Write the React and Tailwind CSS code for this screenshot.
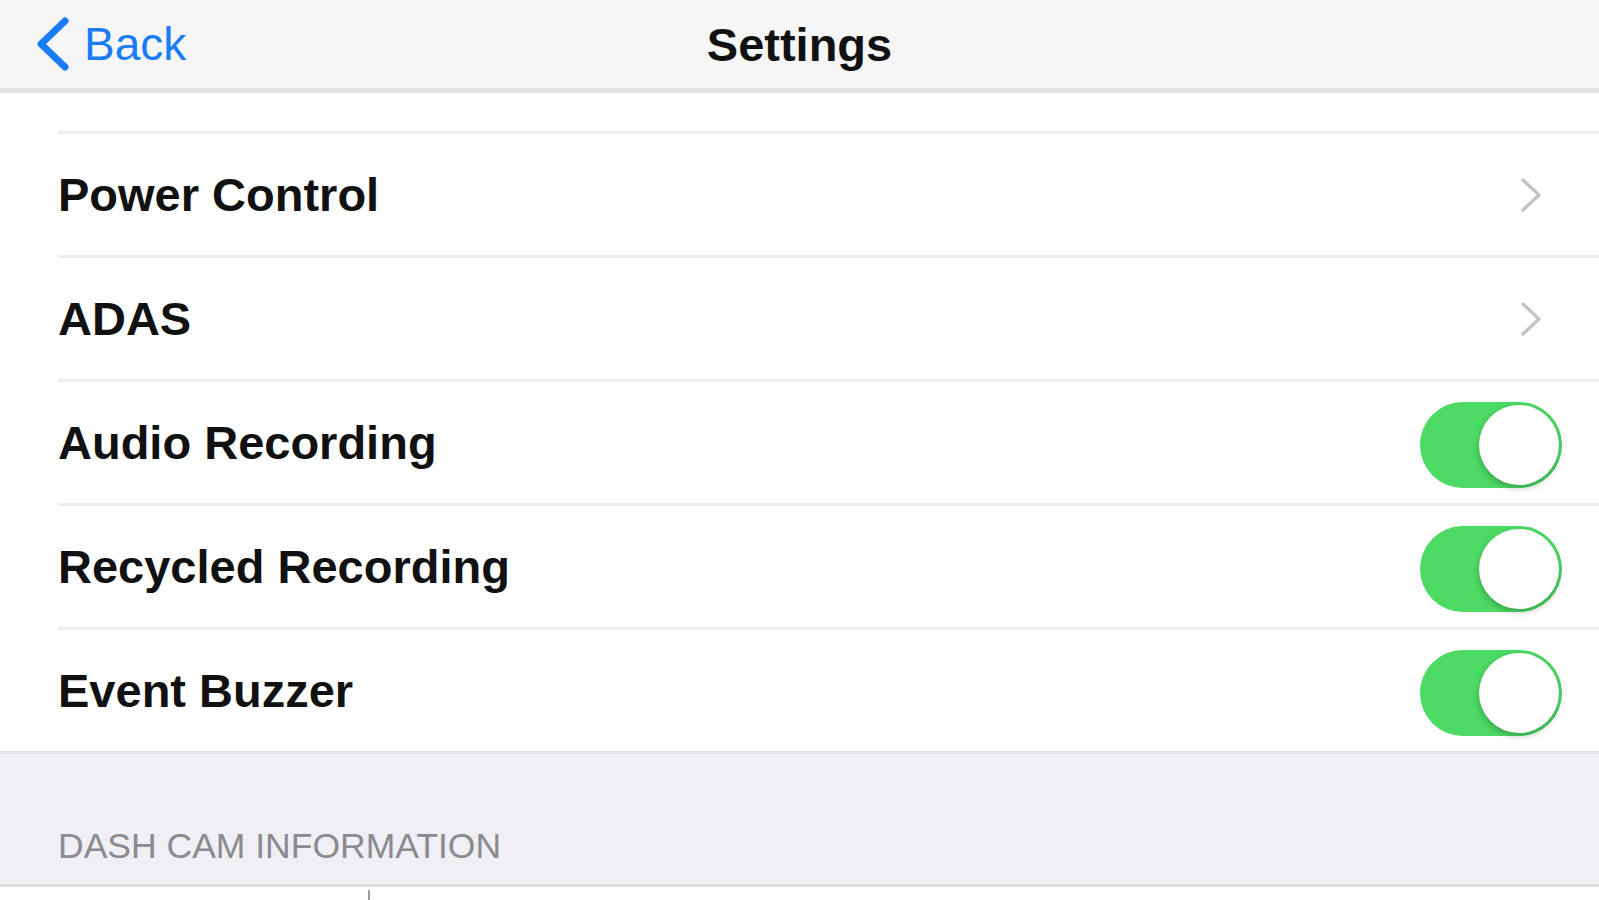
import React from "react";

const rows = [
  { label: "Power Control", type: "link" },
  { label: "ADAS", type: "link" },
  { label: "Audio Recording", type: "toggle" },
  { label: "Recycled Recording", type: "toggle" },
  { label: "Event Buzzer", type: "toggle", last: true },
];

function Chevron() {
  return (
    <svg width="26" height="38" viewBox="0 0 26 38" className="mr-[55px]">
      <polyline
        points="5,4 21,19 5,34"
        fill="none"
        stroke="#c4c4c8"
        strokeWidth="3.5"
        strokeLinecap="round"
        strokeLinejoin="round"
      />
    </svg>
  );
}

function Toggle() {
  return (
    <div className="mr-[37px] mt-[4px] flex h-[86px] w-[142px] items-center justify-end rounded-full bg-[#4cd964] pr-[3px]">
      <div className="h-[80px] w-[80px] rounded-full bg-white shadow-[0_3px_6px_rgba(0,0,0,0.25)]" />
    </div>
  );
}

export default function App() {
  return (
    <div className="flex h-[900px] w-full flex-col overflow-hidden bg-white font-['Liberation_Sans',Arial,sans-serif]">
      {/* Nav bar */}
      <div className="relative flex h-[93px] shrink-0 items-center border-b-[5px] border-[#e4e4e4] bg-[#f6f6f6]">
        <div className="flex items-center pl-[34px] text-[#1b7cf4]">
          <svg width="38" height="56" viewBox="0 0 38 56">
            <polyline
              points="31,5 7,28 31,51"
              fill="none"
              stroke="currentColor"
              strokeWidth="7"
              strokeLinecap="round"
              strokeLinejoin="round"
            />
          </svg>
          <span className="ml-[12px] text-[46px] leading-none">Back</span>
        </div>
        <div className="absolute inset-x-0 flex justify-center pointer-events-none">
          <span className="text-[47px] font-bold leading-none text-[#111]">Settings</span>
        </div>
      </div>

      {/* Settings group */}
      <div className="shrink-0 border-b-[3px] border-[#e3e3e3] bg-white">
        <div className="pl-[58px]">
          <div className="h-[41px] border-b-[3px] border-[#ececec]" />
        </div>
        {rows.map((row) => (
          <div key={row.label} className="pl-[58px]">
            <div
              className={
                row.last
                  ? "flex h-[121px] items-center justify-between"
                  : "flex h-[124px] items-center justify-between border-b-[3px] border-[#ececec]"
              }
            >
              <span className="text-[47px] font-bold leading-none text-[#111]">{row.label}</span>
              {row.type === "link" ? <Chevron /> : <Toggle />}
            </div>
          </div>
        ))}
      </div>

      {/* Section header */}
      <div className="flex h-[133px] shrink-0 items-end border-b-[3px] border-[#dedee2] bg-[#efeff4] pb-[20px] pl-[58px]">
        <span className="text-[35.5px] leading-none text-[#8a8a8f]">DASH CAM INFORMATION</span>
      </div>

      {/* Next group (cut off) */}
      <div className="flex flex-1 bg-white pl-[368px] pt-[3px]">
        <div className="h-full w-[2px] bg-[#9a9a9a]" />
      </div>
    </div>
  );
}
